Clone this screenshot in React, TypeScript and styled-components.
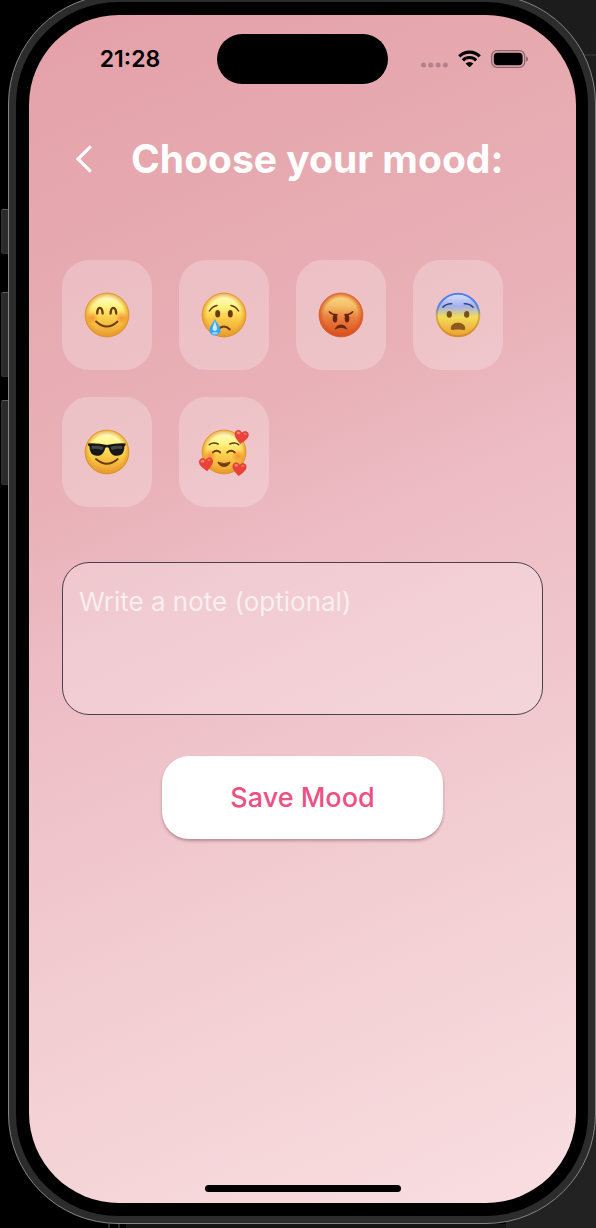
import React, { useState } from "react";
import styled, { createGlobalStyle } from "styled-components";

const GlobalStyle = createGlobalStyle`
  *, *::before, *::after { box-sizing: border-box; }
  body { margin: 0; background: #000; font-family: Inter, "Liberation Sans", sans-serif; }
  button, textarea { font: inherit; }
`;

const Desktop = styled.div`
  position: relative;
  min-height: 100vh;
  padding: 0 0 4px 8px;
  overflow: hidden;
  background:
    linear-gradient(#2c2c2c, #2c2c2c) right 54px / 40px 2px no-repeat,
    linear-gradient(#1c1c1c, #222) right top / 90px 100% no-repeat,
    linear-gradient(90deg, transparent 108px, #2a2a2a 108px 110px, transparent 110px 118px, #2a2a2a 118px 120px, transparent 120px 126px, #151515 126px) left bottom / 100% 4px no-repeat,
    #000;
`;

const SideButton = styled.span<{ $top: number; $height: number }>`
  position: absolute;
  left: 1px;
  top: ${(p) => p.$top}px;
  width: 8px;
  height: ${(p) => p.$height}px;
  border: 1px solid #333;
  border-top-color: #5a5a5a;
  border-radius: 2px 0 0 2px;
  background: #2b2b2b;
`;

const Phone = styled.div`
  position: relative;
  display: flex;
  min-height: calc(100vh + 2px);
  margin-top: -6px;
  padding: 7px;
  border: 1px solid #858585;
  border-radius: 110px;
  background: #2c2c2c;
`;

const Bezel = styled.div`
  display: flex;
  flex: 1;
  padding: 13px 12px 13px 13px;
  border-radius: 102px;
  background: #000;
`;

const Screen = styled.main`
  display: flex;
  flex: 1;
  flex-direction: column;
  min-width: 0;
  padding: 19px 0 11px;
  border-radius: 90px;
  background: linear-gradient(156deg, #e4a0a8 0%, #e9b2b8 36%, #edbbc4 45%, #f2ced2 72%, #f9dee1 100%);
`;

const StatusBar = styled.div`
  display: grid;
  grid-template-columns: 1fr 171px 1fr;
  align-items: center;
`;

const Time = styled.time`
  padding-left: 14px;
  color: #000;
  font-size: 23px;
  font-weight: 600;
  line-height: 28px;
  text-align: center;
`;

const Island = styled.div`
  height: 50px;
  border-radius: 25px;
  background: #000;
`;

const StatusIcons = styled.div`
  display: flex;
  align-items: center;
  justify-content: flex-end;
  gap: 10px;
  padding-right: 47px;
`;

const Header = styled.header`
  display: flex;
  align-items: center;
  gap: 30px;
  margin-top: 51px;
  padding-left: 38px;
`;

const BackButton = styled.button`
  display: flex;
  align-items: center;
  justify-content: center;
  width: 34px;
  height: 48px;
  padding: 0;
  border: 0;
  background: none;
  cursor: pointer;
`;

const Title = styled.h1`
  margin: 0;
  color: #fff;
  font-size: 39px;
  font-weight: 700;
  line-height: 48px;
  white-space: nowrap;
`;

const Content = styled.form`
  display: flex;
  flex-direction: column;
  padding: 0 33px;
`;

const MoodGrid = styled.div`
  display: flex;
  flex-wrap: wrap;
  gap: 27px;
  margin-top: 77px;
`;

const MoodCard = styled.button<{ $selected: boolean }>`
  display: flex;
  align-items: center;
  justify-content: center;
  width: 90px;
  height: 110px;
  padding: 0;
  border: 0;
  border-radius: 27px;
  background: rgba(255, 255, 255, ${(p) => (p.$selected ? 0.5 : 0.24)});
  cursor: pointer;
`;

const Note = styled.textarea`
  display: block;
  width: 100%;
  height: 153px;
  margin-top: 55px;
  padding: 23px 16px;
  border: 1px solid #48424c;
  border-radius: 27px;
  outline: 0;
  background: rgba(255, 255, 255, 0.24);
  color: #fff;
  font-size: 26px;
  line-height: 32px;
  resize: none;

  &::placeholder {
    color: rgba(255, 255, 255, 0.7);
    opacity: 1;
  }
`;

const SaveButton = styled.button`
  align-self: center;
  margin-top: 41px;
  padding: 24px 68px;
  border: 0;
  border-radius: 27px;
  background: #fff;
  box-shadow: 0 2px 3px rgba(80, 30, 40, 0.35);
  color: #ec5085;
  font-size: 27px;
  font-weight: 500;
  line-height: 35px;
  white-space: nowrap;
  cursor: pointer;
`;

const HomeIndicator = styled.div`
  width: 196px;
  height: 7px;
  margin: auto auto 0;
  border-radius: 4px;
  background: #000;
`;

const INK = "#6b3a0c";

const Heart = ({ x, y, tilt }: { x: number; y: number; tilt: number }) => (
  <g transform={`translate(${x} ${y}) rotate(${tilt})`}>
    <path
      d="M0 6.8C-3 4-6.7 1-6.7-2.5C-6.7-6.3-2-7.2 0-3.7C2-7.2 6.7-6.3 6.7-2.5C6.7 1 3 4 0 6.8Z"
      fill="#ea4238"
      stroke="#c92f28"
      strokeWidth=".5"
    />
    <ellipse cx="-3.4" cy="-3.3" rx="2" ry="1.3" fill="#ff9a8a" opacity=".7" />
    <ellipse cx="3.2" cy="-3.5" rx="1.7" ry="1" fill="#ff9a8a" opacity=".5" />
  </g>
);

type MoodId = "happy" | "sad" | "angry" | "anxious" | "cool" | "loved";

const features: Record<MoodId, React.ReactNode> = {
  happy: (
    <>
      <circle cx="-15" cy="3" r="6.5" fill="url(#happy-blush)" />
      <circle cx="15" cy="3" r="6.5" fill="url(#happy-blush)" />
      <g fill="none" stroke={INK} strokeLinecap="round">
        <path d="M-9.8-1.5C-9.5-9-4.8-9-4.4-1.5M3.6-1.5C4-9 8.7-9 9.2-1.5" strokeWidth="2.3" />
        <path d="M-11 6.5Q0 16.5 10.5 6.5" strokeWidth="1.8" />
      </g>
    </>
  ),
  sad: (
    <>
      <g fill="none" stroke={INK} strokeLinecap="round" strokeWidth="1.5">
        <path d="M-14.5-4Q-12-8.5-7-9.5M7-9.5Q12-8.5 14.5-4" />
        <path d="M-6 14.5Q0 8.5 5.8 14.5" strokeWidth="1.9" />
      </g>
      <ellipse cx="-6.3" cy="-1.3" rx="2.5" ry="3.8" fill={INK} />
      <ellipse cx="6.3" cy="-1.3" rx="2.5" ry="3.8" fill={INK} />
      <path d="M-9.2 3.2C-8 8-3.4 11-3.4 15.2A5.6 5.3 0 0 1-14.6 15.2C-14.6 11-10 8-9.2 3.2Z" fill="#3ba5ef" />
      <path d="M-9.2 5.5C-8.8 9-6.5 11.5-7 14C-7.5 16.5-11 16.5-11.3 14C-11.5 11.5-9.5 9-9.2 5.5Z" fill="#c9edff" />
      <ellipse cx="-9" cy="18.2" rx="3" ry="1.3" fill="#8ad4ff" />
    </>
  ),
  angry: (
    <>
      <path d="M-11.5-3Q-9-.2-4-.2M11.5-3Q9-.2 4-.2" fill="none" stroke="#65240d" strokeWidth="1.7" strokeLinecap="round" />
      <ellipse cx="-6" cy="3.5" rx="2.3" ry="4" fill="#65240d" />
      <ellipse cx="6" cy="3.5" rx="2.3" ry="4" fill="#65240d" />
      <path d="M-6 14.2C-4 8.5 4 8.5 6 14.2Q0 10.8-6 14.2Z" fill="#65240d" stroke="#65240d" strokeWidth=".6" />
    </>
  ),
  anxious: (
    <>
      <path d="M-15-7.8Q-11.5-11.5-6.3-11.2M15-7.8Q11.5-11.5 6.3-11.2" fill="none" stroke="#2c4a75" strokeWidth="1.6" strokeLinecap="round" />
      <ellipse cx="-8.7" cy="-.6" rx="2.6" ry="3.3" fill="#77501b" />
      <ellipse cx="8.7" cy="-.6" rx="2.6" ry="3.3" fill="#77501b" />
      <path d="M-7.2 13.2C-7.2 5.8 7.2 5.8 7.2 13.2C7.2 15.3 5.5 15.2 4 14.8Q0 14-4 14.8C-5.5 15.2-7.2 15.3-7.2 13.2Z" fill="#8d5a1c" />
    </>
  ),
  cool: (
    <>
      <path d="M-11 7Q0 16.5 10.7 7" fill="none" stroke={INK} strokeWidth="1.8" strokeLinecap="round" />
      <path
        d="M-19.3-8.6Q-9-9.2 0-6.9Q9-9.2 18.7-8.6L18.2-6.2L17.3-5.5C17.3 0 15.5 3.8 9.8 3.8C5 3.8 2.6 0 1.8-4Q0-5.5-1.8-4C-2.6 0-5 3.8-9.8 3.8C-15.5 3.8-17.3 0-17.5-5.5L-18.7-6.2Z"
        fill="#171717"
      />
      <path d="M-15.5-6Q-9-7-3.5-5Q-4-3-5-2Q-10-4-15.3-3ZM15.3-6Q9-7 3.5-5Q4-3 5-2Q10-4 15.1-3Z" fill="#656565" opacity=".6" />
    </>
  ),
  loved: (
    <>
      <circle cx="-14" cy="4" r="6.5" fill="url(#loved-blush)" />
      <circle cx="14" cy="4" r="6.5" fill="url(#loved-blush)" />
      <g fill="none" stroke={INK} strokeLinecap="round" strokeWidth="1.5">
        <path d="M-14.7-7.3Q-11-10.2-5.8-8M14.7-7.3Q11-10.2 5.8-8" />
        <path d="M-11.2.5Q-7.5-3-3.8.5M3.2.5Q7-3 10.8.5" strokeWidth="1.8" />
      </g>
      <path d="M-6.2 10Q0 13 6.2 10C4.5 16-4.5 16-6.2 10Z" fill={INK} stroke={INK} strokeWidth=".8" strokeLinejoin="round" />
      <Heart x={17.3} y={-15.2} tilt={10} />
      <Heart x={-17.7} y={12} tilt={-8} />
      <Heart x={15.3} y={17} tilt={6} />
    </>
  ),
};

const yellow = ["#fffcd6", "#fff583", "#fbd04c", "#eb9c30"];
const skins: Record<MoodId, string[]> = {
  happy: yellow,
  sad: yellow,
  cool: yellow,
  loved: yellow,
  angry: ["#f8dc88", "#f4be66", "#ea8140", "#d94c20"],
  anxious: ["#dfe3ff", "#a3aff0", "#f3dc58", "#eb9c30"],
};
const rims: Record<MoodId, string> = {
  happy: "#dd8f26",
  sad: "#dd8f26",
  cool: "#dd8f26",
  loved: "#dd8f26",
  angry: "#dd6030",
  anxious: "url(#anxious-rim)",
};

const Emoji = ({ mood }: { mood: MoodId }) => {
  const [a, b, c, d] = skins[mood];
  return (
    <svg width="52" height="52" viewBox="-26 -26 52 52" aria-hidden="true">
      <defs>
        <linearGradient id={`${mood}-skin`} x1="0" y1="0" x2="0" y2="1">
          <stop offset="0" stopColor={a} />
          <stop offset=".3" stopColor={b} />
          <stop offset=".55" stopColor={c} />
          <stop offset="1" stopColor={d} />
        </linearGradient>
        <radialGradient id={`${mood}-edge`}>
          <stop offset=".76" stopColor={mood === "angry" ? "#d9501f" : "#e59a2b"} stopOpacity="0" />
          <stop offset="1" stopColor={mood === "angry" ? "#d9501f" : "#e59a2b"} stopOpacity={mood === "anxious" ? 0 : 0.85} />
        </radialGradient>
        <radialGradient id={`${mood}-blush`}>
          <stop offset="0" stopColor="#f5722a" stopOpacity=".65" />
          <stop offset="1" stopColor="#f5722a" stopOpacity="0" />
        </radialGradient>
        <linearGradient id={`${mood}-rim`} gradientUnits="userSpaceOnUse" x1="0" y1="-22" x2="0" y2="22">
          <stop offset=".1" stopColor="#2f6ff5" />
          <stop offset=".35" stopColor="#4e86cf" />
          <stop offset=".52" stopColor="#cfa63c" />
          <stop offset="1" stopColor="#cf8825" />
        </linearGradient>
      </defs>
      <circle r="22" fill={`url(#${mood}-skin)`} />
      <circle r="22" fill={`url(#${mood}-edge)`} />
      <circle r={mood === "anxious" ? 21.3 : 21.9} fill="none" stroke={rims[mood]} strokeWidth={mood === "anxious" ? 2 : 1} opacity=".85" />
      {features[mood]}
    </svg>
  );
};

const moods: MoodId[] = ["happy", "sad", "angry", "anxious", "cool", "loved"];

const CellularDots = () => (
  <svg width="27" height="18" viewBox="0 0 27 18" aria-hidden="true">
    <g fill="#000" opacity=".22">
      {[2.5, 9.8, 17.1, 24.4].map((x) => (
        <circle key={x} cx={x} cy="15" r="2.5" />
      ))}
    </g>
  </svg>
);

const Wifi = () => (
  <svg width="23" height="18" viewBox="0 0 23 18" aria-hidden="true">
    <g fill="none" stroke="#000" strokeWidth="3.2">
      <path d="M1.3 6.4A14.4 14.4 0 0 1 21.7 6.4" />
      <path d="M4.9 10.3A9.2 9.2 0 0 1 18.1 10.3" />
    </g>
    <path d="M7.6 13.5A5.6 5.6 0 0 1 15.4 13.5L12.2 16.8Q11.5 17.4 10.8 16.8Z" />
  </svg>
);

const Battery = () => (
  <svg width="38" height="18" viewBox="0 0 38 18" aria-hidden="true">
    <rect x=".7" y=".7" width="33" height="16.6" rx="5.3" fill="none" stroke="#000" strokeOpacity=".4" strokeWidth="1.3" />
    <rect x="2.8" y="2.8" width="28.8" height="12.4" rx="3.6" />
    <path d="M35.2 6.2Q37 7.2 37 9T35.2 11.8Z" opacity=".45" />
  </svg>
);

export default function App() {
  const [selected, setSelected] = useState<MoodId | null>(null);
  const [note, setNote] = useState("");

  return (
    <>
      <GlobalStyle />
      <Desktop>
        <SideButton $top={209} $height={45} />
        <SideButton $top={292} $height={85} />
        <SideButton $top={400} $height={85} />
        <Phone>
          <Bezel>
            <Screen>
              <StatusBar>
                <Time>21:28</Time>
                <Island />
                <StatusIcons>
                  <CellularDots />
                  <Wifi />
                  <Battery />
                </StatusIcons>
              </StatusBar>
              <Header>
                <BackButton type="button" aria-label="Back">
                  <svg width="18" height="28" viewBox="0 0 18 28" aria-hidden="true">
                    <path d="M15.8 1.3L3 14L15.8 26.7" fill="none" stroke="#fff" strokeWidth="3.2" />
                  </svg>
                </BackButton>
                <Title>Choose your mood:</Title>
              </Header>
              <Content onSubmit={(e) => e.preventDefault()}>
                <MoodGrid>
                  {moods.map((mood) => (
                    <MoodCard
                      key={mood}
                      type="button"
                      aria-label={mood}
                      aria-pressed={selected === mood}
                      $selected={selected === mood}
                      onClick={() => setSelected(mood)}
                    >
                      <Emoji mood={mood} />
                    </MoodCard>
                  ))}
                </MoodGrid>
                <Note
                  aria-label="Note"
                  placeholder="Write a note (optional)"
                  value={note}
                  onChange={(e) => setNote(e.target.value)}
                />
                <SaveButton type="submit">Save Mood</SaveButton>
              </Content>
              <HomeIndicator />
            </Screen>
          </Bezel>
        </Phone>
      </Desktop>
    </>
  );
}
